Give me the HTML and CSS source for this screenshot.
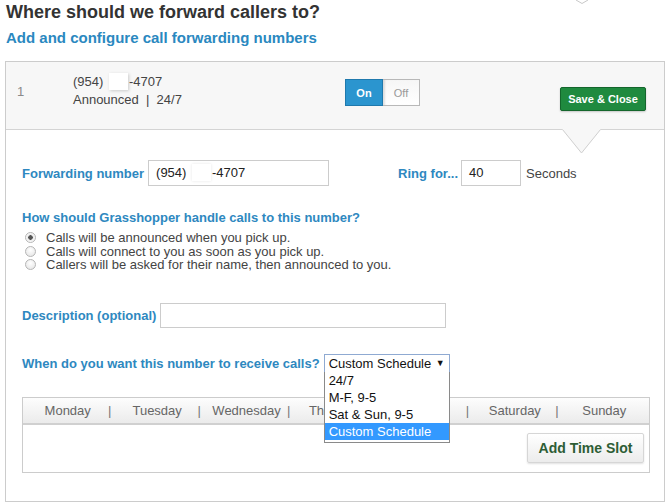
FILE: index.html
```html
<!DOCTYPE html>
<html lang="en">
<head>
  <meta charset="UTF-8">
  <title>Call Forwarding</title>
  <link rel="stylesheet" href="styles.css">
</head>
<body>

<div class="page">
  <svg class="top-tip" width="12" height="4" viewBox="0 0 12 4"><polyline points="0,0 6,3.5 12,0" fill="none" stroke="#c8c8c8" stroke-width="1"/></svg>

  <h1 class="title">Where should we forward callers to?</h1>
  <h2 class="subtitle">Add and configure call forwarding numbers</h2>

  <div class="panel">
    <div class="panel-head">
      <div class="row-index">1</div>
      <div class="row-info">
        <div>(954) <span class="blur"></span>-4707</div>
        <div>Announced &nbsp;|&nbsp; 24/7</div>
      </div>
      <div class="toggle">
        <span class="toggle-on">On</span>
        <span class="toggle-off">Off</span>
      </div>
      <button class="btn-save">Save &amp; Close</button>
      <svg class="panel-arrow" width="39" height="25" viewBox="0 0 39 25">
        <polygon points="0,0 39,0 19.5,24" fill="#f7f7f7"/>
        <polyline points="0.5,0.5 19.5,24 38.5,0.5" fill="none" stroke="#cfcfcf" stroke-width="1"/>
      </svg>
    </div>

    <div class="panel-body">
      <div class="field-row">
        <label class="field-label" for="fwd">Forwarding number</label>
        <div class="text-input fwd-input">(954) <span class="blur blur-sm"></span>-4707</div>
        <label class="field-label ring-label" for="ring">Ring for...</label>
        <div class="text-input ring-input">40</div>
        <span class="unit">Seconds</span>
      </div>

      <div class="question">How should Grasshopper handle calls to this number?</div>
      <div class="radio-list">
        <label class="radio-item"><input type="radio" name="mode" checked> Calls will be announced when you pick up.</label>
        <label class="radio-item"><input type="radio" name="mode"> Calls will connect to you as soon as you pick up.</label>
        <label class="radio-item"><input type="radio" name="mode"> Callers will be asked for their name, then announced to you.</label>
      </div>

      <div class="field-row desc-row">
        <label class="field-label" for="desc">Description (optional)</label>
        <div class="text-input desc-input"></div>
      </div>

      <div class="field-row when-row">
        <span class="field-label">When do you want this number to receive calls?</span>
        <div class="select">
          <span>Custom Schedule</span>
          <span class="select-caret">&#9660;</span>
          <ul class="select-list">
            <li>24/7</li>
            <li>M-F, 9-5</li>
            <li>Sat &amp; Sun, 9-5</li>
            <li class="selected">Custom Schedule</li>
          </ul>
        </div>
      </div>

      <div class="schedule">
        <div class="schedule-head">
          <div class="day">Monday</div>
          <div class="day">Tuesday</div>
          <div class="day">Wednesday</div>
          <div class="day">Thursday</div>
          <div class="day">Friday</div>
          <div class="day">Saturday</div>
          <div class="day">Sunday</div>
        </div>
        <div class="schedule-body">
          <button class="btn-slot">Add Time Slot</button>
        </div>
      </div>
    </div>
  </div>
</div>

</body>
</html>
```

FILE: styles.css
```css
body {
  margin: 0;
  background: #fff;
  font-family: "Liberation Sans", Arial, sans-serif;
  font-size: 13px;
  color: #444;
}
.page {
  position: relative;
  padding: 0 6px 0 5px;
}
.top-tip {
  position: absolute;
  top: 0;
  left: 576px;
}
.title {
  margin: 0;
  padding: 1px 0 0 1px;
  font-size: 18px;
  line-height: 22px;
  color: #333;
}
.subtitle {
  margin: 6px 0 0 1px;
  font-size: 15px;
  line-height: 18px;
  color: #2a88c0;
}
.panel {
  margin-top: 14px;
  border: 1px solid #ccc;
}
.panel-head {
  position: relative;
  display: flex;
  align-items: flex-start;
  height: 67px;
  padding: 0 18px 0 11px;
  background: #f7f7f7;
  border-bottom: 1px solid #d4d4d4;
}
.row-index {
  width: 56px;
  margin-top: 21px;
  line-height: 18px;
  color: #8a8a8a;
}
.row-info {
  width: 272px;
  margin-top: 11px;
  line-height: 18px;
  color: #444;
}
.blur {
  display: inline-block;
  width: 19px;
  height: 17px;
  margin: 0 1px 0 2px;
  vertical-align: -4px;
  background: #fff;
  box-shadow: 1px 1px 3px rgba(0, 0, 0, 0.18);
}
.blur-sm {
  box-shadow: 0 0 3px rgba(0, 0, 0, 0.1);
}
.toggle {
  display: flex;
  margin-top: 17px;
  height: 27px;
  font-size: 11px;
  font-weight: bold;
}
.toggle-on,
.toggle-off {
  display: flex;
  align-items: center;
  justify-content: center;
  width: 36px;
}
.toggle-on {
  background: #2b95cf;
  border: 1px solid #1f79ad;
  color: #fff;
}
.toggle-off {
  width: 36px;
  background: linear-gradient(#f6f6f6, #fff);
  border: 1px solid #b8b8b8;
  border-left: none;
  box-shadow: inset 3px 0 2px -1px rgba(0, 0, 0, 0.12);
  color: #999;
  font-weight: normal;
}
.btn-save {
  margin: 25px 0 0 auto;
  width: 86px;
  height: 24px;
  padding: 0;
  background: #1f8a3f;
  border: 1px solid #14662c;
  border-radius: 2px;
  box-shadow: 0 1px 2px rgba(0, 0, 0, 0.2);
  color: #fff;
  font-family: inherit;
  font-size: 11px;
  font-weight: bold;
}
.panel-arrow {
  position: absolute;
  top: 100%;
  left: 556px;
}
.panel-body {
  padding: 30px 14px 28px 16px;
}
.field-row {
  display: flex;
  align-items: center;
  height: 26px;
}
.field-label {
  margin-right: 4px;
  font-weight: bold;
  color: #2e88c0;
}
.text-input {
  box-sizing: border-box;
  height: 26px;
  padding: 0 7px;
  line-height: 24px;
  border: 1px solid #ccc;
  background: #fff;
  color: #222;
}
.fwd-input {
  width: 181px;
}
.ring-label {
  margin-left: 69px;
  margin-right: 3px;
}
.ring-input {
  width: 60px;
}
.unit {
  margin-left: 5px;
  color: #444;
}
.question {
  margin-top: 23px;
  line-height: 18px;
  font-weight: bold;
  color: #2e88c0;
}
.radio-list {
  margin-top: 4px;
}
.radio-item {
  display: flex;
  align-items: center;
  height: 13.5px;
  color: #444;
}
.radio-item input {
  appearance: none;
  width: 11px;
  height: 11px;
  margin: 0 10px 0 3px;
  border: 1px solid #b5b5b5;
  border-radius: 50%;
  background: radial-gradient(circle at 50% 35%, #fff, #e2e2e2);
}
.radio-item input:checked {
  background: radial-gradient(circle, #555 0 2px, #e8e8e8 2.5px, #fff 5px);
}
.desc-row {
  margin-top: 31px;
}
.desc-input {
  width: 286px;
  height: 25px;
}
.when-row {
  margin-top: 25px;
  height: 19px;
}
.select {
  position: relative;
  box-sizing: border-box;
  display: flex;
  align-items: center;
  width: 126px;
  height: 19px;
  padding: 0 4px;
  border: 1px solid #8faad2;
  background: #fff;
  color: #111;
}
.select-caret {
  margin-left: auto;
  font-size: 9px;
  color: #111;
}
.select-list {
  position: absolute;
  top: 100%;
  left: -1px;
  z-index: 2;
  width: 126px;
  margin: 0;
  padding: 0 0 2px;
  box-sizing: border-box;
  list-style: none;
  background: #fff;
  border: 1px solid #8a8a8a;
  border-top: none;
}
.select-list li {
  height: 17px;
  padding-left: 4px;
  line-height: 17px;
  color: #111;
}
.select-list li.selected {
  background: #3399ff;
  color: #fff;
}
.schedule {
  margin-top: 24px;
  border: 1px solid #ccc;
}
.schedule-head {
  display: grid;
  grid-template-columns: repeat(7, 1fr);
  height: 25px;
  background: linear-gradient(#fdfdfd, #ebebeb);
  border-bottom: 2px solid #d0d0d0;
}
.day {
  position: relative;
  display: flex;
  align-items: center;
  justify-content: center;
  color: #666;
}
.day::after {
  content: "|";
  position: absolute;
  right: 1px;
  color: #777;
}
.day:last-child::after {
  content: none;
}
.schedule-body {
  display: flex;
  justify-content: flex-end;
  height: 47px;
  padding: 8px 5px 0 0;
  box-sizing: border-box;
}
.btn-slot {
  width: 117px;
  height: 30px;
  padding: 0;
  background: linear-gradient(#fff, #ececec);
  border: 1px solid #d6d6d6;
  border-radius: 2px;
  box-shadow: 0 1px 2px rgba(0, 0, 0, 0.12);
  color: #2d5d35;
  font-family: inherit;
  font-size: 14px;
  font-weight: bold;
}
```
